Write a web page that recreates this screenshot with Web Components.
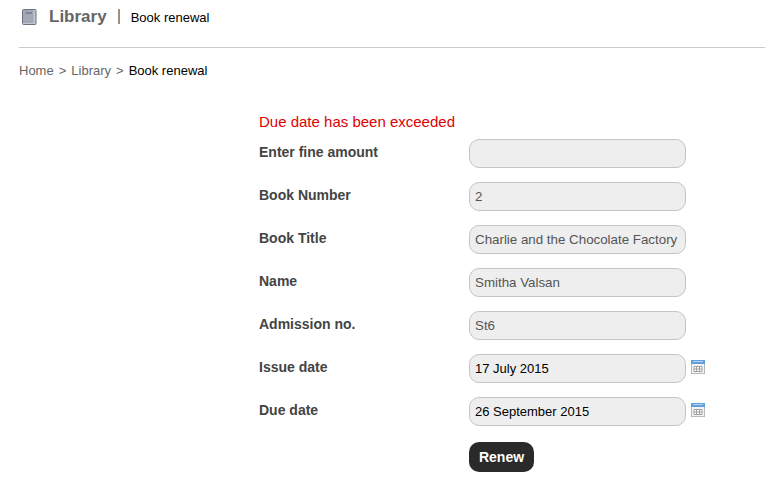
<!DOCTYPE html>
<html>
<head>
<meta charset="utf-8">
<title>Book renewal</title>
<style>
  body { margin: 0; background: #fff; font-family: "Liberation Sans", Arial, sans-serif; }
</style>
</head>
<body>
<lib-page>
  <page-header title="Library" sub="Book renewal"></page-header>
  <bread-crumbs>
    <a>Home</a><a>Library</a><b>Book renewal</b>
  </bread-crumbs>
  <renew-form>
    <span slot="error">Due date has been exceeded</span>
    <form-row label="Enter fine amount"></form-row>
    <form-row label="Book Number" value="2"></form-row>
    <form-row label="Book Title" value="Charlie and the Chocolate Factory"></form-row>
    <form-row label="Name" value="Smitha Valsan"></form-row>
    <form-row label="Admission no." value="St6"></form-row>
    <form-row label="Issue date" value="17 July 2015" date></form-row>
    <form-row label="Due date" value="26 September 2015" date></form-row>
    <form-row button="Renew"></form-row>
  </renew-form>
</lib-page>

<script>
class LibPage extends HTMLElement {
  constructor() {
    super();
    this.attachShadow({ mode: 'open' });
    this.shadowRoot.innerHTML = `
      <style>
        :host { display: block; padding-left: 19px; height: 484px; box-sizing: border-box; overflow: hidden; }
      </style>
      <slot></slot>`;
  }
}

class PageHeader extends HTMLElement {
  constructor() {
    super();
    this.attachShadow({ mode: 'open' });
    this.shadowRoot.innerHTML = `
      <style>
        :host { display: block; height: 47px; border-bottom: 1px solid #ccc; }
        .bar { display: flex; align-items: center; height: 33px; padding-left: 3px; }
        svg { width: 15px; height: 16px; margin-right: 12px; flex: none; }
        h1 { margin: 0; font-size: 17px; font-weight: bold; color: #666; line-height: 20px; }
        i { width: 2px; height: 15px; background: #a08c80; margin: 0 11px 0 11px; }
        span { font-size: 13px; color: #000; position: relative; top: 1px; }
      </style>
      <div class="bar">
        <svg viewBox="0 0 15 16">
          <rect x="0.5" y="0.5" width="13.5" height="15" rx="1" fill="#c3c6cf" stroke="#6d7280"/>
          <rect x="1" y="1" width="10.5" height="13" fill="#a4a8b5"/>
          <rect x="3.5" y="3" width="6.5" height="2" fill="#80859a"/>
        </svg>
        <h1></h1><i></i><span></span>
      </div>`;
  }
  connectedCallback() {
    this.shadowRoot.querySelector('h1').textContent = this.getAttribute('title');
    this.shadowRoot.querySelector('span').textContent = this.getAttribute('sub');
  }
}

class BreadCrumbs extends HTMLElement {
  constructor() {
    super();
    this.attachShadow({ mode: 'open' });
    this.shadowRoot.innerHTML = `
      <style>
        :host { display: block; padding-top: 15px; font-size: 13px; line-height: 15px; color: #666; }
        ::slotted(a) { color: #666; }
        ::slotted(a)::after { content: ">"; margin: 0 5px; }
        ::slotted(b) { color: #000; font-weight: normal; }
      </style>
      <slot></slot>`;
  }
}

class RenewForm extends HTMLElement {
  constructor() {
    super();
    this.attachShadow({ mode: 'open' });
    this.shadowRoot.innerHTML = `
      <style>
        :host { display: flex; flex-direction: column; gap: 14px; padding: 35px 0 0 240px; }
        .err { font-size: 15px; line-height: 17px; color: #e00000; margin-bottom: -5px; }
      </style>
      <div class="err"><slot name="error"></slot></div>
      <slot></slot>`;
  }
}

class FormRow extends HTMLElement {
  constructor() {
    super();
    this.attachShadow({ mode: 'open' });
    this.shadowRoot.innerHTML = `
      <style>
        :host { display: flex; align-items: flex-start; }
        label { width: 210px; flex: none; font-size: 14px; font-weight: bold; color: #444; line-height: 16px; padding-top: 5px; }
        .field { box-sizing: border-box; width: 217px; height: 29px; padding: 0 5px; background: #eee; border: 1px solid #c4c4c4;
                 border-radius: 10px; font-size: 13.33px; line-height: 27px; color: #555; white-space: nowrap; overflow: hidden; }
        .field.date { color: #000; font-size: 13px; }
        svg { width: 14px; height: 14px; margin: 6px 0 0 5px; flex: none; }
        button { box-sizing: border-box; height: 30px; width: 65px; margin-top: 2px; padding: 0; border: 0; border-radius: 10px; background: #2a2a2a;
                 color: #fff; font: bold 14px "Liberation Sans", Arial, sans-serif; }
      </style>`;
  }
  connectedCallback() {
    const root = this.shadowRoot;
    const label = document.createElement('label');
    label.textContent = this.getAttribute('label') || '';
    root.appendChild(label);
    if (this.hasAttribute('button')) {
      const btn = document.createElement('button');
      btn.textContent = this.getAttribute('button');
      root.appendChild(btn);
      return;
    }
    const field = document.createElement('div');
    field.className = 'field';
    field.textContent = this.getAttribute('value') || '';
    root.appendChild(field);
    if (this.hasAttribute('date')) {
      field.classList.add('date');
      const t = document.createElement('template');
      t.innerHTML = `<svg viewBox="0 0 14 14">
        <rect x="0" y="0" width="14" height="14" fill="#b8b8b8"/>
        <rect x="0" y="0" width="14" height="4" fill="#5f9fdd"/>
        <rect x="2" y="1" width="10" height="1" fill="#b5d4f2"/>
        <rect x="1" y="4" width="12" height="9" fill="#f2f2f2"/>
        <path d="M3 6.5h8v5H3zM5.5 6.5v5M8.5 6.5v5M3 9h8" fill="#fff" stroke="#a0a0a0" stroke-width="1"/>
      </svg>`;
      root.appendChild(t.content);
    }
  }
}

customElements.define('lib-page', LibPage);
customElements.define('page-header', PageHeader);
customElements.define('bread-crumbs', BreadCrumbs);
customElements.define('renew-form', RenewForm);
customElements.define('form-row', FormRow);
</script>
</body>
</html>
